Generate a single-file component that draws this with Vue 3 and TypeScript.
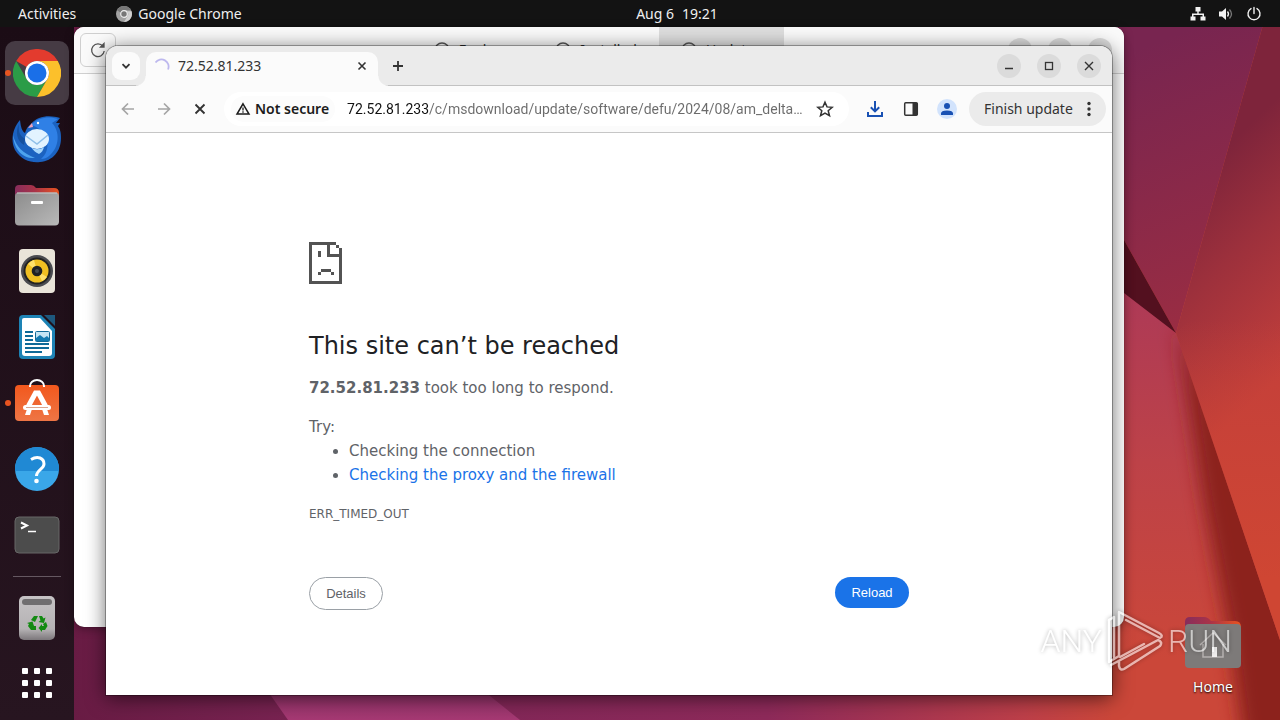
<script setup lang="ts">
import { ref } from 'vue'

const address = ref('72.52.81.233/c/msdownload/update/software/defu/2024/08/am_delta…')
const storeTabs = [
  { label: 'Explore', active: false },
  { label: 'Installed', active: false },
  { label: 'Updates', active: true },
]
const gridCells = [0, 1, 2, 3, 4, 5, 6, 7, 8]
</script>

<template>
  <div class="desktop">
    <svg class="wallpaper" viewBox="0 0 1280 720" preserveAspectRatio="none" aria-hidden="true">
      <defs>
        <linearGradient id="base" x1="0" x2="1" y1="0" y2="0">
          <stop offset="0" stop-color="#63193f" />
          <stop offset=".3" stop-color="#7f2657" />
          <stop offset=".6" stop-color="#8e2a5a" />
          <stop offset=".8" stop-color="#bd3f49" />
          <stop offset=".87" stop-color="#cb4739" />
        </linearGradient>
        <linearGradient id="top" gradientUnits="userSpaceOnUse" x1="1110" y1="60" x2="1215" y2="330">
          <stop offset="0" stop-color="#782550" />
          <stop offset="1" stop-color="#9b2d42" />
        </linearGradient>
        <linearGradient id="right" gradientUnits="userSpaceOnUse" x1="1190" y1="180" x2="1330" y2="330">
          <stop offset="0" stop-color="#7e243b" />
          <stop offset=".4" stop-color="#9c303c" />
          <stop offset="1" stop-color="#c33f3b" />
        </linearGradient>
        <linearGradient id="rightLow" x1="0" x2="0" y1="0" y2="1">
          <stop offset=".2" stop-color="#cf4633" stop-opacity="0" />
          <stop offset=".85" stop-color="#cf4633" />
        </linearGradient>
        <linearGradient id="low" gradientUnits="userSpaceOnUse" x1="0" y1="300" x2="0" y2="660">
          <stop offset="0" stop-color="#ae3a56" />
          <stop offset=".45" stop-color="#bd4248" />
          <stop offset="1" stop-color="#cb4739" />
        </linearGradient>
        <linearGradient id="pink" x1="0" x2="0" y1="0" y2="1">
          <stop offset="0" stop-color="#8b3065" />
          <stop offset="1" stop-color="#a63973" />
        </linearGradient>
        <filter id="soft" x="-50%" y="-10%" width="200%" height="120%">
          <feGaussianBlur stdDeviation="9" />
        </filter>
      </defs>
      <rect width="1280" height="720" fill="url(#base)" />
      <path d="M260 680h210l50 40H288z" fill="url(#pink)" />
      <path d="M1112 280h12l52 53 104 307v80H1112z" fill="url(#low)" />
      <path d="M1176 325L1203 500 1228 630 1246 760H1330V640z" fill="#8c241f" filter="url(#soft)" />
      <path d="M1000 0h270l-94 333-52-93z" fill="url(#top)" />
      <path d="M1270 0h10v640l-104-307z" fill="url(#right)" />
      <path d="M1280 240v400l-104-307z" fill="url(#rightLow)" />
      <path d="M1100 197l24 43 52 93-52-40-24-16z" fill="#53101f" />
    </svg>

    <header class="topbar">
      <div class="topbar-left">
        <button class="bar-button">Activities</button>
        <button class="bar-button app-menu">
          <svg width="16" height="16" viewBox="0 0 16 16" aria-hidden="true">
            <circle cx="8" cy="8" r="8" fill="#a2a2a2" />
            <path d="M1 4.2A8 8 0 0 1 15 4.2H8a4 4 0 0 0-3.6 2.3z" fill="#777" />
            <path d="M8 16l3.8-6A4 4 0 0 0 11 5.300h4.500A8 8 0 0 1 8 16z" fill="#d0d0d0" />
            <circle cx="8" cy="8" r="3.300" fill="#777" stroke="#eee" stroke-width="1.200" />
          </svg>
          <span>Google Chrome</span>
        </button>
      </div>
      <button class="bar-button clock"><span>Aug 6</span><span>19:21</span></button>
      <button class="bar-button tray" aria-label="System menu">
        <svg width="16" height="16" viewBox="0 0 16 16" fill="#f2f2f2" aria-hidden="true">
          <path d="M5.500 1h5v4.500H8.700v2H14v3h1.500v4h-5v-4h2V9h-9v1.500h2v4h-5v-4H2v-3h5.300v-2H5.500z" />
        </svg>
        <svg width="16" height="16" viewBox="0 0 16 16" aria-hidden="true">
          <path d="M1 5.500h3L8 2v12l-4-3.500H1z" fill="#f2f2f2" />
          <path d="M9.500 5.500q2 2.500 0 5" fill="none" stroke="#f2f2f2" stroke-width="1.300" />
          <path d="M11.500 3.500q4 4.500 0 9" fill="none" stroke="#777" stroke-width="1.300" />
        </svg>
        <svg width="16" height="16" viewBox="0 0 16 16" fill="none" stroke="#f2f2f2" stroke-width="1.400" stroke-linecap="round" aria-hidden="true">
          <path d="M8 1.500v6M5 2.600a6 6 0 1 0 6 0" />
        </svg>
      </button>
    </header>

    <div class="session">
      <nav class="dock" aria-label="Dock">
        <button class="dock-item current" aria-label="Google Chrome">
          <i class="dot"></i>
          <svg width="48" height="48" viewBox="0 0 48 48">
            <path d="M3.200 12A24 24 0 0 1 44.800 12H24A12 12 0 0 0 13.600 18z" fill="#e33b2e" />
            <path d="M3.200 12A24 24 0 0 0 24 48l10.400-18A12 12 0 0 1 13.600 30z" fill="#2b9c47" />
            <path d="M24 48A24 24 0 0 0 44.800 12H24a12 12 0 0 1 10.400 18z" fill="#fcc02b" />
            <circle cx="24" cy="24" r="12" fill="#fff" />
            <circle cx="24" cy="24" r="9.500" fill="#1a6fe8" />
          </svg>
        </button>
        <button class="dock-item" aria-label="Thunderbird">
          <svg width="50" height="48" viewBox="0 0 50 48">
            <path d="M8 5C1 13-2 25 3 35c6 10 16 13 25 12 13-1 21-11 21-24 0-6-1-9-3-12l2-3h-4l4-5C39 0 26 0 19 9c-3 2-5 5-6 9-3-2-4-5-5-13z" fill="#1b62c0" />
            <path d="M19 10C26 2 38 1 46 4l-6 4c8 8 8 24-3 33-2 2-5 3-8 3 10-8 10-28-10-34z" fill="#2f80e6" />
            <path d="M1 20c3 12 10 18 22 23-12 1-21-8-22-23z" fill="#4da3ee" />
            <path d="M7 9c-1 8 1 12 6 15l-1 6C5 26 3 17 7 9z" fill="#14509f" />
            <ellipse cx="25" cy="24" rx="12" ry="10" fill="#e2f3ff" />
            <path d="M14 21l11 8 11-9" fill="none" stroke="#8fbfe8" stroke-width="1.500" />
            <path d="M19 32c3 3 9 3 13 0q-1 5-5 7-5-2-8-7z" fill="#a6d6fb" />
            <circle cx="26" cy="8" r="1.200" fill="#fff" />
            <path d="M16 13l4-5 1 4z" fill="#f2a2b9" />
          </svg>
        </button>
        <button class="dock-item" aria-label="Files">
          <svg width="46" height="42" viewBox="0 0 46 42">
            <defs>
              <linearGradient id="tab"><stop offset="0" stop-color="#872d5c" /><stop offset=".45" stop-color="#a93348" /><stop offset="1" stop-color="#e95420" /></linearGradient>
              <linearGradient id="body" x2="1" y2="1"><stop offset="0" stop-color="#8c8c8c" /><stop offset="1" stop-color="#b9b9b9" /></linearGradient>
            </defs>
            <path d="M1 5q0-4 4-4h12q3 0 5 3h18q5 0 5 5v8H1z" fill="url(#tab)" />
            <rect x="1" y="8.500" width="44" height="33" rx="4" fill="url(#body)" />
            <path d="M3 9h40" stroke="#c9c9c9" />
            <rect x="17" y="17" width="12" height="3" rx="1" fill="#fff" />
          </svg>
        </button>
        <button class="dock-item" aria-label="Rhythmbox">
          <svg width="38" height="46" viewBox="0 0 38 46">
            <rect x="1" y="1" width="36" height="44" rx="4" fill="#e9e4d9" />
            <circle cx="19" cy="23" r="16" fill="#4a4b50" />
            <circle cx="19" cy="23" r="13.500" fill="#222" />
            <circle cx="19" cy="23" r="11.500" fill="#f0bf22" />
            <path d="M19 23L10 16a11.500 11.500 0 0 1 6-4zM19 23l10 6a11.500 11.500 0 0 1-5 4z" fill="#ffe06a" />
            <circle cx="19" cy="23" r="5.300" fill="#1f2024" />
            <circle cx="19" cy="23" r="2" fill="#45484f" />
          </svg>
        </button>
        <button class="dock-item" aria-label="LibreOffice Writer">
          <svg width="38" height="46" viewBox="0 0 38 46">
            <path d="M5 1h18l14 14v26q0 4-4 4H5q-4 0-4-4V5q0-4 4-4z" fill="#1d83b5" />
            <path d="M26 1h11v11z" fill="#1d587d" />
            <path d="M6 4h16l12 13v22q0 3-3 3H7q-3 0-3-3V6q0-2 2-2z" fill="#fff" />
            <path d="M7 18h8M7 22h8M7 26h8M7 30h24M7 34h24M7 38h17" stroke="#0f6a98" stroke-width="2" />
            <rect x="17.500" y="17.500" width="14" height="10" rx="1" fill="#c4e4f4" stroke="#126b99" />
            <path d="M18 27v-3l4-3 4 3 3-2 2 2v3z" fill="#137ab0" />
          </svg>
        </button>
        <button class="dock-item" aria-label="Ubuntu Software">
          <i class="dot"></i>
          <svg width="46" height="50" viewBox="0 0 46 50">
            <defs><linearGradient id="bag" x2="0" y2="1"><stop offset="0" stop-color="#f2581d" /><stop offset="1" stop-color="#ee7545" /></linearGradient></defs>
            <rect x="1" y="7" width="44" height="36" rx="4" fill="url(#bag)" />
            <path d="M16 9V8a7 6 0 0 1 14 0v1" fill="none" stroke="#fff" stroke-width="2" />
            <path d="M14.500 28L21.500 15h3l7 13" fill="none" stroke="#fff" stroke-width="5" />
            <path d="M13 31l-2 6h5l2-6zM33 31l2 6h-5l-2-6z" fill="#fff" />
            <rect x="9" y="27" width="28" height="5" rx="2.500" fill="#fff" />
            <path d="M12 29.500h22" stroke="#dba58e" />
          </svg>
        </button>
        <button class="dock-item" aria-label="Help">
          <svg width="44" height="44" viewBox="0 0 44 44">
            <circle cx="22" cy="22" r="22" fill="#3aa7e9" />
            <path d="M0 22a22 22 0 0 1 44 0v2H0z" fill="#2089d4" />
            <path d="M16 12.500q5-3 9-1.500 4 1.500 4 6c0 5-7.500 6-7.500 12" fill="none" stroke="#fff" stroke-width="3" />
            <circle cx="21.500" cy="34" r="2.300" fill="#fff" />
          </svg>
        </button>
        <button class="dock-item" aria-label="Terminal">
          <svg width="46" height="38" viewBox="0 0 46 38">
            <rect x="1" y="1" width="44" height="36" rx="4" fill="#4c4c4c" stroke="#676767" />
            <path d="M7 6.500l6 3-6 3" fill="none" stroke="#fff" stroke-width="2" />
            <path d="M14 15.500h8" stroke="#fff" stroke-width="1.500" />
          </svg>
        </button>
        <hr class="dock-rule" />
        <button class="dock-item" aria-label="Trash">
          <svg width="38" height="46" viewBox="0 0 38 46">
            <defs><linearGradient id="bin" x2="0" y2="1"><stop offset="0" stop-color="#c6c3c5" /><stop offset=".75" stop-color="#b5b2b4" /><stop offset="1" stop-color="#7c777b" /></linearGradient></defs>
            <rect x="1" y="1" width="36" height="44" rx="5" fill="url(#bin)" />
            <rect x="4" y="4" width="30" height="6" rx="3" fill="#706e70" />
            <g fill="#138a12">
              <path d="M13 25l3-4h4l-3 6zM21 21h3l1.500 2.500 2-1-1.500 5.500-5.500-1 2-1.500z" />
              <path d="M25 29l3-2 1.500 4-2.500 4h-3v2l-3.500-4 3.500-4v2h2z" />
              <path d="M18 31v4h-5l-3-4 1-2-2-1 5.500-1.500L16 31z" />
            </g>
          </svg>
        </button>
        <button class="dock-item apps" aria-label="Show Applications">
          <span class="apps-grid"><i v-for="c in gridCells" :key="c"></i></span>
        </button>
      </nav>

      <main class="workspace">
        <button class="home">
          <svg width="58" height="54" viewBox="0 0 58 54" aria-hidden="true">
            <path d="M1 6q0-5 5-5h14q4 0 7 4h24q6 0 6 6v9H1z" fill="url(#tab)" />
            <rect x="1" y="8" width="56" height="44" rx="4" fill="#7d7a79" />
            <path d="M16 29l13-12 13 12M19 28v13h20V28" fill="none" stroke="#b5b1b0" stroke-width="1.500" />
            <rect x="28" y="31" width="5" height="10" fill="#f0eeee" />
          </svg>
          <span>Home</span>
        </button>

        <section class="window store" aria-label="Ubuntu Software">
          <header class="store-head">
            <button class="store-refresh" aria-label="Refresh">
              <svg width="16" height="16" viewBox="0 0 16 16" fill="none" stroke="#555" stroke-width="1.300">
                <path d="M13 4.500A6.300 6.300 0 1 0 14.200 9" /><path d="M10.500 5H14V1.500z" fill="#555" />
              </svg>
            </button>
            <div class="store-tabs">
              <button v-for="t in storeTabs" :key="t.label" class="store-tab" :class="{ active: t.active }">
                <svg width="16" height="16" viewBox="0 0 16 16" fill="none" stroke="#555" stroke-width="1.400"><circle cx="8" cy="8" r="7" /><path d="M8 4v4l3 2" /></svg>
                <span>{{ t.label }}</span>
              </button>
            </div>
            <div class="frame-buttons">
              <button aria-label="Minimize"></button>
              <button aria-label="Maximize"></button>
              <button aria-label="Close"></button>
            </div>
          </header>
        </section>

        <section class="window chrome" aria-label="Google Chrome">
          <header class="tabstrip">
            <button class="tab-search" aria-label="Search tabs">
              <svg width="12" height="12" viewBox="0 0 12 12" fill="none" stroke="#333" stroke-width="1.800"><path d="M2.500 4.200L6 7.700l3.500-3.500" /></svg>
            </button>
            <div class="tab">
              <svg width="16" height="16" viewBox="0 0 16 16" fill="none" stroke="#bdb8ee" stroke-width="1.800"><path d="M1.500 4.500A7.200 7.200 0 0 1 14 11.500" /></svg>
              <span class="tab-title">72.52.81.233</span>
              <button class="plain" aria-label="Close tab">
                <svg width="12" height="12" viewBox="0 0 12 12" stroke="#333" stroke-width="1.600"><path d="M2.500 2.500l7 7M9.500 2.500l-7 7" /></svg>
              </button>
            </div>
            <button class="plain new-tab" aria-label="New tab">
              <svg width="14" height="14" viewBox="0 0 14 14" stroke="#333" stroke-width="1.800"><path d="M7 2v10M2 7h10" /></svg>
            </button>
            <div class="frame-buttons">
              <button aria-label="Minimize"><svg width="12" height="12" viewBox="0 0 12 12" stroke="#333" stroke-width="1.300"><path d="M2 8.500h8" /></svg></button>
              <button aria-label="Maximize"><svg width="12" height="12" viewBox="0 0 12 12" fill="none" stroke="#333" stroke-width="1.300"><rect x="2.500" y="2.500" width="7" height="7" /></svg></button>
              <button aria-label="Close"><svg width="12" height="12" viewBox="0 0 12 12" stroke="#333" stroke-width="1.400"><path d="M2 2l8 8M10 2l-8 8" /></svg></button>
            </div>
          </header>

          <div class="toolbar">
            <button class="tool" aria-label="Back">
              <svg width="16" height="16" viewBox="0 0 16 16" fill="none" stroke="#a5a5a5" stroke-width="1.700"><path d="M14 8H3M8 2.500L2.500 8 8 13.500" /></svg>
            </button>
            <button class="tool" aria-label="Forward">
              <svg width="16" height="16" viewBox="0 0 16 16" fill="none" stroke="#a5a5a5" stroke-width="1.700"><path d="M2 8h11M8 2.500L13.500 8 8 13.500" /></svg>
            </button>
            <button class="tool" aria-label="Stop loading">
              <svg width="16" height="16" viewBox="0 0 16 16" stroke="#333" stroke-width="1.900"><path d="M3.500 3.500l9 9M12.500 3.500l-9 9" /></svg>
            </button>
            <div class="omnibox">
              <button class="security">
                <svg width="16" height="16" viewBox="0 0 16 16" fill="none" stroke="#1b1b1b" stroke-width="1.500" aria-hidden="true"><path d="M8 2.800L14 13H2z" /><path d="M8 6.500v3M8 10.300v1.500" stroke-width="1.300" /></svg>
                <span>Not secure</span>
              </button>
              <input v-model="address" class="address" type="text" aria-label="Address and search bar" spellcheck="false" />
              <button class="plain star" aria-label="Bookmark this tab">
                <svg width="18" height="18" viewBox="0 0 18 18" fill="none" stroke="#333" stroke-width="1.500"><path d="M9 2.200l2 4.700 5.200.4-4 3.400 1.300 5L9 13l-4.500 2.700 1.300-5-4-3.400 5.200-.4z" /></svg>
              </button>
            </div>
            <div class="actions">
              <button class="tool" aria-label="Downloads">
                <svg width="18" height="18" viewBox="0 0 18 18" fill="none" stroke="#1951b3" stroke-width="2"><path d="M9 1v10M4.800 7.200L9 11.400l4.200-4.200M2 12v4h14v-4" /></svg>
              </button>
              <button class="tool" aria-label="Side panel">
                <svg width="16" height="16" viewBox="0 0 16 16" fill="none" stroke="#333" stroke-width="1.500"><rect x="1.700" y="1.700" width="12.600" height="12.600" rx="1" /><path d="M9.500 2h5v12h-5z" fill="#333" stroke="none" /></svg>
              </button>
              <button class="tool" aria-label="Profile">
                <svg width="20" height="20" viewBox="0 0 20 20"><circle cx="10" cy="10" r="10" fill="#d2e3fc" /><g fill="#1951b3"><circle cx="10" cy="7" r="3" /><path d="M4 16v-1.500q0-3 6-3t6 3V16z" /></g></svg>
              </button>
            </div>
            <button class="update">
              <span>Finish update</span>
              <svg width="4" height="16" viewBox="0 0 4 16" fill="#333" aria-hidden="true"><circle cx="2" cy="2.500" r="1.700" /><circle cx="2" cy="8" r="1.700" /><circle cx="2" cy="13.500" r="1.700" /></svg>
            </button>
          </div>

          <div class="page">
            <article class="error">
              <svg width="33" height="42" viewBox="0 0 33 42" fill="#535353" shape-rendering="crispEdges" aria-hidden="true">
                <path d="M0 0h27v3h3v3h3v36H0zM3 3v36h27V15H18V3zM21 3v9h9V6h-3V3z" fill-rule="evenodd" />
                <path d="M9 9h3v6H9zM12 27h10v3H12zM9 30h3v3H9zM22 30h3v3h-3z" />
              </svg>
              <h1>This site can’t be reached</h1>
              <p><strong>72.52.81.233</strong> took too long to respond.</p>
              <div class="suggest">
                <p>Try:</p>
                <ul>
                  <li>Checking the connection</li>
                  <li><a href="#">Checking the proxy and the firewall</a></li>
                </ul>
              </div>
              <div class="code">ERR_TIMED_OUT</div>
              <div class="buttons">
                <button class="details">Details</button>
                <button class="reload">Reload</button>
              </div>
            </article>
          </div>
        </section>
      </main>
    </div>

    <div class="watermark">
      <span>ANY</span>
      <svg width="58" height="66" viewBox="0 0 58 66" fill="none" stroke="#fff" stroke-width="2.500" stroke-linejoin="round" stroke-linecap="round" aria-hidden="true">
        <path d="M3 12v42l10-6V4l40 21q5 3 1 5l-34-18" />
        <path d="M3 12l5-3v40" />
        <path d="M14 49l24-13M5 57l47-25q5 2 2 6L18 61q-4 2-5-3v-4" />
      </svg>
      <span>RUN</span>
    </div>
  </div>
</template>

<style>
html,
body {
  margin: 0;
}
</style>

<style scoped>
.desktop {
  position: relative;
  display: flex;
  flex-direction: column;
  min-height: 100vh;
  overflow: hidden;
  font-family: "Noto Sans", "Open Sans", sans-serif;
  font-size: 14px;
  line-height: 20px;
  background: #63193f;
}
.desktop * {
  box-sizing: border-box;
}
button {
  margin: 0;
  padding: 0;
  border: 0;
  background: none;
  font: inherit;
  color: inherit;
}
svg {
  display: block;
  flex: none;
}
.wallpaper {
  position: absolute;
  inset: 0;
  width: 100%;
  height: 100%;
}

.topbar {
  position: relative;
  display: grid;
  grid-template-columns: 1fr auto 1fr;
  align-items: center;
  height: 27px;
  background: #131313;
  color: #efefef;
}
.topbar-left {
  display: flex;
  gap: 40px;
  padding-left: 18px;
}
.app-menu {
  display: flex;
  align-items: center;
  gap: 6px;
}
.clock {
  display: flex;
  gap: 8px;
  padding-left: 74px;
}
.tray {
  display: flex;
  gap: 12px;
  justify-self: end;
  padding-right: 18px;
}

.session {
  position: relative;
  display: flex;
  flex: 1;
}
.dock {
  display: flex;
  flex-direction: column;
  align-items: center;
  gap: 2px;
  width: 74px;
  padding: 14px 0 6px;
  background: linear-gradient(#1b0c15, #271520);
}
.dock-item {
  position: relative;
  display: grid;
  place-items: center;
  flex: none;
  width: 64px;
  height: 64px;
  border-radius: 10px;
}
.dock-item.current {
  background: #463b44;
}
.dot {
  position: absolute;
  left: 0;
  top: 29px;
  width: 6px;
  height: 6px;
  border-radius: 50%;
  background: #e95420;
}
.dock-rule {
  width: 48px;
  height: 1px;
  margin: 7px 0;
  border: 0;
  background: #655861;
}
.dock-item.apps {
  height: 62px;
}
.apps-grid {
  display: grid;
  grid-template-columns: repeat(3, 6px);
  gap: 6px;
}
.apps-grid i {
  height: 6px;
  border-radius: 1px;
  background: #fff;
}

.workspace {
  position: relative;
  flex: 1;
}
.home {
  position: absolute;
  right: 31px;
  bottom: 23px;
  display: flex;
  flex-direction: column;
  align-items: center;
  gap: 7px;
  width: 72px;
  color: #fff;
  text-shadow: 0 1px 2px #000;
}
.window {
  position: absolute;
  overflow: hidden;
}
.store {
  inset: 0 156px 93px 0;
  border-radius: 10px;
  background: #fff;
  box-shadow: 0 0 1px rgba(0, 0, 0, .5), 0 2px 10px rgba(0, 0, 0, .35);
}
.store-head {
  display: grid;
  grid-template-columns: 1fr auto 1fr;
  align-items: center;
  height: 47px;
  padding: 0 12px 0 6px;
  border-bottom: 1px solid #d0d0d0;
  background: #fafafa;
}
.store-refresh {
  display: grid;
  place-items: center;
  width: 36px;
  height: 34px;
  border: 1px solid #cfcfcf;
  border-radius: 6px;
}
.store-tabs {
  display: flex;
  height: 46px;
}
.store-tab {
  display: flex;
  align-items: center;
  justify-content: center;
  gap: 9px;
  width: 125px;
  color: #333;
}
.store-tab.active {
  background: #dedede;
}
.frame-buttons {
  display: flex;
  justify-self: end;
  gap: 16px;
  margin-left: auto;
}
.frame-buttons button {
  display: grid;
  place-items: center;
  width: 24px;
  height: 24px;
  border-radius: 50%;
  background: #dbdbdb;
}

.chrome {
  inset: 19px 168px 25px 32px;
  display: flex;
  flex-direction: column;
  border-radius: 12px 12px 0 0;
  background: #fff;
  box-shadow: 0 0 0 1px rgba(0, 0, 0, .3), 0 3px 20px rgba(0, 0, 0, .6);
}
.tabstrip {
  display: flex;
  align-items: center;
  height: 40px;
  padding: 0 11px 0 6px;
  background: #ebebeb;
  box-shadow: inset 0 -1px #c2c2c2;
}
.tab-search {
  display: grid;
  place-items: center;
  width: 28px;
  height: 28px;
  border-radius: 9px;
  background: #fbfbfb;
}
.tab {
  position: relative;
  display: flex;
  align-items: center;
  gap: 8px;
  align-self: flex-end;
  width: 232px;
  height: 34px;
  margin-left: 6px;
  padding: 0 10px 6px 8px;
  border-radius: 10px 10px 0 0;
  background: #fbfbfb;
  color: #333;
}
.tab::before,
.tab::after {
  content: "";
  position: absolute;
  bottom: 0;
  width: 10px;
  height: 10px;
}
.tab::before {
  right: 100%;
  background: radial-gradient(circle at 0 0, transparent 9px, #fbfbfb 10px);
}
.tab::after {
  left: 100%;
  background: radial-gradient(circle at 100% 0, transparent 9px, #fbfbfb 10px);
}
.tab-title {
  flex: 1;
}
.plain {
  display: grid;
  place-items: center;
}
.new-tab {
  width: 28px;
  height: 28px;
  margin-left: 6px;
}
.toolbar {
  display: flex;
  align-items: center;
  gap: 2px;
  height: 47px;
  padding: 0 6px 0 5px;
  border-bottom: 1px solid #c6c6c6;
  background: #fbfbfb;
}
.tool {
  display: grid;
  place-items: center;
  flex: none;
  width: 34px;
  height: 34px;
}
.omnibox {
  display: flex;
  flex: 1;
  align-items: center;
  min-width: 0;
  height: 34px;
  margin-left: 5px;
  padding: 0 15px 0 7px;
  border-radius: 17px;
  background: #fff;
}
.security {
  display: flex;
  align-items: center;
  gap: 4px;
  height: 26px;
  padding: 0 6px 0 4px;
  border-radius: 13px;
  background: #fcfcfc;
  color: #1b1b1b;
  font-weight: 600;
  white-space: nowrap;
}
.address {
  flex: 1;
  min-width: 0;
  height: 24px;
  margin: 0 6px 0 12px;
  padding: 0;
  border: 0;
  outline: 0;
  font-family: Roboto, "Noto Sans", sans-serif;
  font-size: 14px;
  color: transparent;
  background: linear-gradient(90deg, #111 81px, #6b6b6b 81px);
  background-clip: text;
}
.actions {
  display: flex;
  gap: 2px;
  margin: 0 3px 0 7px;
}
.update {
  display: flex;
  align-items: center;
  justify-content: space-between;
  width: 137px;
  height: 34px;
  padding: 0 15px;
  border-radius: 17px;
  background: #ebebeb;
  color: #333;
  white-space: nowrap;
}

.page {
  flex: 1;
  padding: 109px 24px 0;
  background: #fff;
}
.error {
  max-width: 600px;
  margin: 0 auto;
  color: #5f6368;
  font-family: "DejaVu Sans", sans-serif;
  font-size: 15px;
  line-height: 24px;
}
.error h1 {
  margin: 47px 0 15px;
  color: #202124;
  font-size: 24px;
  font-weight: 400;
  line-height: 30px;
}
.error p {
  margin: 0;
}
.suggest {
  margin-top: 15px;
}
.suggest ul {
  margin: 0;
  padding-left: 40px;
}
.suggest a {
  color: #1a73e8;
  text-decoration: none;
}
.code {
  margin-top: 15px;
  font-size: 12px;
}
.buttons {
  display: flex;
  align-items: flex-start;
  justify-content: space-between;
  margin-top: 51px;
}
.buttons button {
  min-width: 74px;
  padding: 8px 16px;
  border-radius: 17px;
  font-family: "Liberation Sans", sans-serif;
  font-size: 13px;
  line-height: 15px;
}
.details {
  border: 1px solid #9aa0a6;
  color: #5f6368;
}
.reload {
  background: #1a73e8;
  color: #fff;
}

.watermark {
  position: absolute;
  right: 48px;
  bottom: 46px;
  display: flex;
  align-items: center;
  gap: 4px;
  color: #fff;
  font-family: Roboto, sans-serif;
  font-size: 32px;
  font-weight: 300;
  line-height: 40px;
  opacity: .6;
  filter: drop-shadow(0 0 2px rgba(0, 0, 0, .5));
  pointer-events: none;
}
</style>
